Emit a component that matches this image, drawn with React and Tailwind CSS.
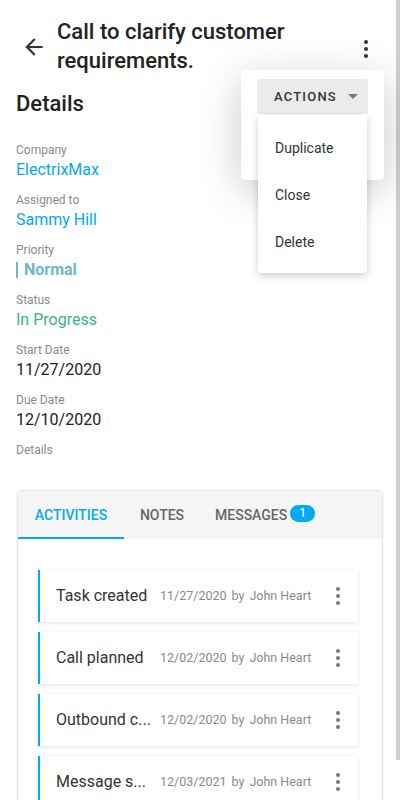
const font = { fontFamily: 'Roboto, "Liberation Sans", sans-serif' };

function Kebab({ className = '' }) {
  return (
    <svg width="4" height="18" viewBox="0 0 4 18" className={className}>
      <circle cx="2" cy="2" r="2" fill="currentColor" />
      <circle cx="2" cy="9" r="2" fill="currentColor" />
      <circle cx="2" cy="16" r="2" fill="currentColor" />
    </svg>
  );
}

function BackArrow({ className = '' }) {
  return (
    <svg width="26" height="26" viewBox="0 0 24 24" className={className}>
      <path
        d="M20 11H7.83l5.59-5.59L12 4l-8 8 8 8 1.41-1.41L7.83 13H20v-2z"
        fill="currentColor"
      />
    </svg>
  );
}

const activities = [
  { title: 'Task created', date: '11/27/2020' },
  { title: 'Call planned', date: '12/02/2020' },
  { title: 'Outbound c...', date: '12/02/2020' },
  { title: 'Message s...', date: '12/03/2021' },
];

export default function App() {
  return (
    <div className="relative w-[400px] h-[800px] overflow-hidden bg-white text-[#333]" style={font}>

      {/* SCROLLBAR */}
      <div className="absolute right-0 top-0 w-[4px] h-[760px] bg-[#cfcfcf]" />

      <div className="w-[396px]">

        {/* HEADER */}
        <div className="flex items-start pt-[17px] pl-[21px] pr-[28px]">
          <BackArrow className="mt-[17px] text-[#333]" />
          <h1 className="ml-[10px] flex-1 text-[22px] leading-[29px] font-medium text-[#222]">
            Call to clarify customer requirements.
          </h1>
          <Kebab className="mt-[23px] text-[#333]" />
        </div>

        <h2 className="mt-[14px] ml-[16px] text-[22px] leading-[29px] font-medium text-[#222]">
          Details
        </h2>

        {/* FIELDS */}
        <div className="ml-[16px] mt-[24px]">
          <div className="h-[50px]">
            <div className="text-[12px] leading-[16px] text-[#8a8a8a]">Company</div>
            <div className="text-[16px] leading-[22px] text-[#03a9f4] mt-[1px]">ElectrixMax</div>
          </div>
          <div className="h-[50px]">
            <div className="text-[12px] leading-[16px] text-[#8a8a8a]">Assigned to</div>
            <div className="text-[16px] leading-[22px] text-[#03a9f4] mt-[1px]">Sammy Hill</div>
          </div>
          <div className="h-[50px]">
            <div className="text-[12px] leading-[16px] text-[#8a8a8a]">Priority</div>
            <div className="flex items-center mt-[1px]">
              <div className="w-[2px] h-[16px] bg-[#6fb6c8]" />
              <div className="ml-[6px] text-[16px] leading-[22px] font-bold text-[#6fb6c8]">Normal</div>
            </div>
          </div>
          <div className="h-[50px]">
            <div className="text-[12px] leading-[16px] text-[#8a8a8a]">Status</div>
            <div className="text-[16px] leading-[22px] text-[#3fae94] mt-[1px]">In Progress</div>
          </div>
          <div className="h-[50px]">
            <div className="text-[12px] leading-[16px] text-[#8a8a8a]">Start Date</div>
            <div className="text-[16px] leading-[22px] text-[#222] mt-[1px]">11/27/2020</div>
          </div>
          <div className="h-[50px]">
            <div className="text-[12px] leading-[16px] text-[#8a8a8a]">Due Date</div>
            <div className="text-[16px] leading-[22px] text-[#222] mt-[1px]">12/10/2020</div>
          </div>
          <div className="text-[12px] leading-[16px] text-[#8a8a8a]">Details</div>
        </div>

        {/* TABS CARD */}
        <div className="mt-[32px] ml-[17px] w-[366px] h-[400px] rounded-t-[4px] border border-[#e6e6e6] shadow-[0_1px_3px_rgba(0,0,0,0.08)]">
          <div className="flex h-[48px] bg-[#f5f5f5] text-[14px] font-medium">
            <div className="relative w-[106px] flex items-center justify-center text-[#03a9f4]">
              ACTIVITIES
              <div className="absolute left-0 right-0 bottom-0 h-[2px] bg-[#03a9f4]" />
            </div>
            <div className="w-[76px] flex items-center justify-center text-[#666]">NOTES</div>
            <div className="flex items-center ml-[15px] text-[#666]">
              MESSAGES
              <span className="ml-[3px] -mt-[4px] w-[25px] h-[17px] rounded-full bg-[#03a9f4] text-white text-[13px] font-normal flex items-center justify-center">
                1
              </span>
            </div>
          </div>

          <div className="pt-[31px] pl-[20px] flex flex-col gap-[10px]">
            {activities.map((a) => (
              <div
                key={a.date + a.title}
                className="flex items-center w-[320px] h-[52px] bg-white border-l-2 border-[#03a9f4] shadow-[0_1px_4px_rgba(0,0,0,0.12)]"
              >
                <div className="ml-[16px] w-[100px] text-[16px] text-[#333] whitespace-nowrap">{a.title}</div>
                <div className="ml-[4px] text-[12.5px] text-[#8a8a8a] whitespace-nowrap">
                  {a.date}
                  <span className="ml-[5px]">by</span>
                  <span className="ml-[5px]">John Heart</span>
                </div>
                <Kebab className="ml-auto mr-[18px] text-[#777]" />
              </div>
            ))}
          </div>
        </div>

      </div>

      {/* ACTIONS POPUP */}
      <div className="absolute left-[241px] top-[70px] w-[143px] h-[110px] bg-white rounded-[4px] shadow-[0_10px_40px_rgba(0,0,0,0.22)]">
        <div className="absolute left-[16px] top-[9px] w-[111px] h-[35px] bg-[#ebebeb] rounded-t-[3px] flex items-center pl-[17px] text-[13px] font-medium tracking-[1.2px] text-[#333]">
          ACTIONS
          <svg width="10" height="5" viewBox="0 0 10 5" className="ml-[11px]">
            <path d="M0 0 L10 0 L5 5 Z" fill="#777" />
          </svg>
        </div>
        <div className="absolute left-[17px] top-[45px] w-[109px] h-[158px] bg-white rounded-b-[4px] shadow-[0_3px_8px_rgba(0,0,0,0.2)] text-[14px] text-[#333]">
          <div className="pl-[17px] pt-[24px] leading-[18px]">Duplicate</div>
          <div className="pl-[17px] pt-[29px] leading-[18px]">Close</div>
          <div className="pl-[17px] pt-[29px] leading-[18px]">Delete</div>
        </div>
      </div>

    </div>
  );
}
